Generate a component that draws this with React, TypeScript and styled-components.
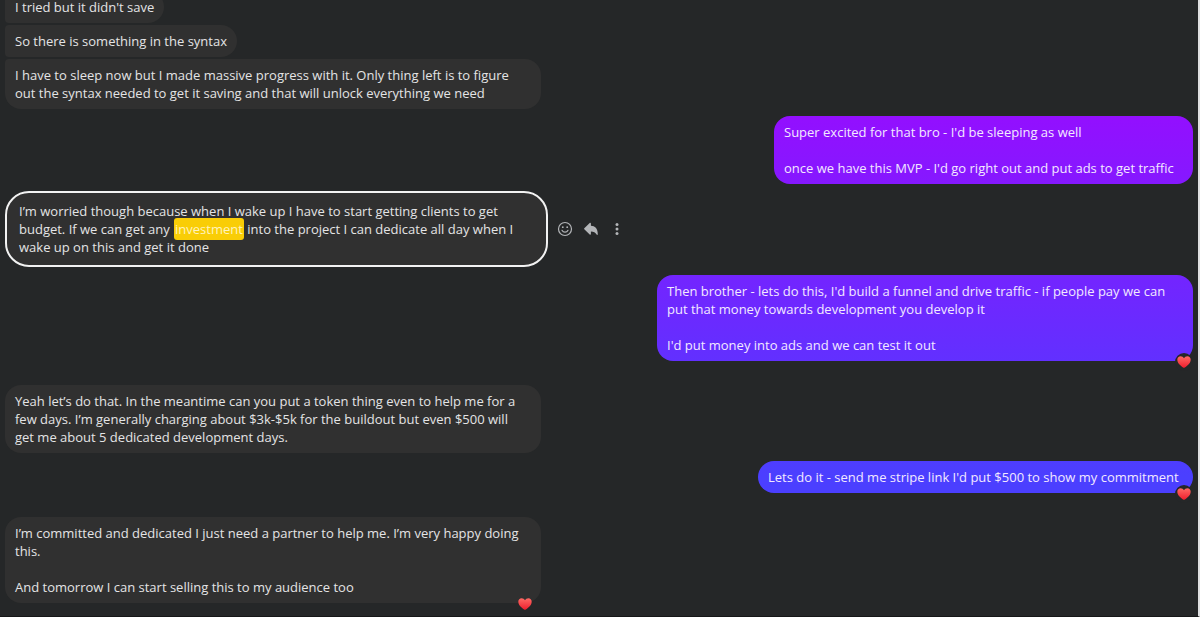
import React from "react";
import styled, { createGlobalStyle, css } from "styled-components";

const GlobalStyle = createGlobalStyle`
  *, *::before, *::after { box-sizing: border-box; }
  body { margin: 0; background: #252728; }
`;

const Page = styled.main`
  height: 100vh;
  overflow: hidden;
  display: flex;
  flex-direction: column;
  justify-content: flex-end;
  padding: 0 5px 13px;
  background: #252728;
  border-right: 2px solid #dfe0e1;
  border-bottom: 1px solid #161718;
  color: #e4e4e5;
  font: 13px/18px "Open Sans", "Noto Sans", sans-serif;
`;

const Row = styled.div<{ $mine?: boolean; $gap: number }>`
  flex: none;
  display: flex;
  align-items: center;
  justify-content: ${(p) => (p.$mine ? "flex-end" : "flex-start")};
  margin-top: ${(p) => p.$gap}px;
`;

const Bubble = styled.div<{ $mine?: boolean; $width?: number; $group?: "middle" | "end" }>`
  position: relative;
  width: ${(p) => (p.$width ? `${p.$width}px` : "auto")};
  max-width: 100%;
  padding: 7px 10px;
  border-radius: 16px;
  background: #303030;
  white-space: pre-line;
  ${(p) => p.$group === "middle" && css`border-radius: 4px 16px 16px 4px;`}
  ${(p) => p.$group === "end" && css`border-top-left-radius: 4px;`}
  ${(p) =>
    p.$mine &&
    css`
      color: #f3e9ff;
      background: linear-gradient(#aa00ff 0, #4b3fff 476px) fixed;
    `}
`;

const FocusedBubble = styled(Bubble)`
  padding: 9px 12px;
  border: 2px solid #f2f2f2;
  border-radius: 24px;
`;

const Line = styled.div``;

const Mark = styled.mark`
  padding: 2px 1px;
  margin-left: 1px;
  border-radius: 3px;
  background: #f9cd06;
  color: #fff3bd;
`;

const Actions = styled.div`
  display: flex;
  margin-left: 4px;
`;

const IconButton = styled.button`
  display: grid;
  place-items: center;
  width: 26px;
  height: 26px;
  padding: 0;
  border: 0;
  border-radius: 50%;
  background: transparent;
  color: #b3b5b8;
  cursor: pointer;
`;

const Reaction = styled.span`
  position: absolute;
  right: 0;
  bottom: -10px;
  display: grid;
  place-items: center;
  width: 18px;
  height: 18px;
  border-radius: 50%;
  background: #252728;
`;

const GreyReaction = styled(Reaction)`
  right: 7px;
  background: transparent;
`;

const Heart = () => (
  <svg width="14" height="14" viewBox="0 0 14 14" role="img" aria-label="Love">
    <defs>
      <linearGradient id="heart" x1="0" y1="0" x2="0" y2="1">
        <stop offset="0" stopColor="#ff6a64" />
        <stop offset="1" stopColor="#ee1c2c" />
      </linearGradient>
    </defs>
    <path
      fill="url(#heart)"
      d="M7 13C5.400 12.100.3 8.800.3 4.700.3 2.600 1.800 1.200 3.600 1.200c1.500 0 2.700.8 3.400 2 .7-1.200 1.900-2 3.400-2 1.800 0 3.300 1.400 3.300 3.500C13.700 8.800 8.600 12.100 7 13z"
    />
  </svg>
);

export default function App() {
  return (
    <>
      <GlobalStyle />
      <Page>
        <Row $gap={0}>
          <Bubble $group="middle">I tried but it didn't save</Bubble>
        </Row>
        <Row $gap={2}>
          <Bubble $group="middle">So there is something in the syntax</Bubble>
        </Row>
        <Row $gap={2}>
          <Bubble $width={536} $group="end">
            {"I have to sleep now but I made massive progress with it. Only thing left is to figure\nout the syntax needed to get it saving and that will unlock everything we need"}
          </Bubble>
        </Row>
        <Row $mine $gap={7}>
          <Bubble $mine $width={419}>
            {"Super excited for that bro - I'd be sleeping as well\n\nonce we have this MVP - I'd go right out and put ads to get traffic"}
          </Bubble>
        </Row>
        <Row $gap={7}>
          <FocusedBubble $width={543}>
            <Line>I’m worried though because when I wake up I have to start getting clients to get</Line>
            <Line>
              budget. If we can get any <Mark>investment</Mark> into the project I can dedicate all day when I
            </Line>
            <Line>wake up on this and get it done</Line>
          </FocusedBubble>
          <Actions>
            <IconButton aria-label="React">
              <svg width="16" height="16" viewBox="0 0 16 16" fill="none" stroke="currentColor" strokeLinecap="round">
                <circle cx="8" cy="8" r="6.500" strokeWidth="1.200" />
                <path d="M5 9.300c.6 1.200 1.700 1.900 3 1.900s2.400-.7 3-1.900" strokeWidth="1.200" />
                <circle cx="5.800" cy="6.200" r=".9" fill="currentColor" stroke="none" />
                <circle cx="10.200" cy="6.200" r=".9" fill="currentColor" stroke="none" />
              </svg>
            </IconButton>
            <IconButton aria-label="Reply">
              <svg width="16" height="16" viewBox="0 0 16 16" fill="currentColor">
                <path d="M1.300 7.200 6.700 1.900c.5-.5 1.200-.2 1.200.5v2.400c4 .2 6.900 2.600 6.900 8.400 0 .8-.8 1-1.200.3-1.200-2-2.800-3-5.700-3.100v2.500c0 .7-.7 1-1.200.5L1.300 8.300a.8.8 0 0 1 0-1.100z" />
              </svg>
            </IconButton>
            <IconButton aria-label="More">
              <svg width="16" height="16" viewBox="0 0 16 16" fill="currentColor">
                <circle cx="8" cy="3.500" r="1.500" />
                <circle cx="8" cy="8" r="1.500" />
                <circle cx="8" cy="12.500" r="1.500" />
              </svg>
            </IconButton>
          </Actions>
        </Row>
        <Row $mine $gap={8}>
          <Bubble $mine $width={536}>
            {"Then brother - lets do this, I'd build a funnel and drive traffic - if people pay we can\nput that money towards development you develop it\n\nI'd put money into ads and we can test it out"}
            <Reaction><Heart /></Reaction>
          </Bubble>
        </Row>
        <Row $gap={24}>
          <Bubble $width={536}>
            {"Yeah let’s do that. In the meantime can you put a token thing even to help me for a\nfew days. I’m generally charging about $3k-$5k for the buildout but even $500 will\nget me about 5 dedicated development days."}
          </Bubble>
        </Row>
        <Row $mine $gap={8}>
          <Bubble $mine $width={435}>
            Lets do it - send me stripe link I'd put $500 to show my commitment
            <Reaction><Heart /></Reaction>
          </Bubble>
        </Row>
        <Row $gap={24}>
          <Bubble $width={536}>
            {"I’m committed and dedicated I just need a partner to help me. I’m very happy doing\nthis.\n\nAnd tomorrow I can start selling this to my audience too"}
            <GreyReaction><Heart /></GreyReaction>
          </Bubble>
        </Row>
      </Page>
    </>
  );
}
